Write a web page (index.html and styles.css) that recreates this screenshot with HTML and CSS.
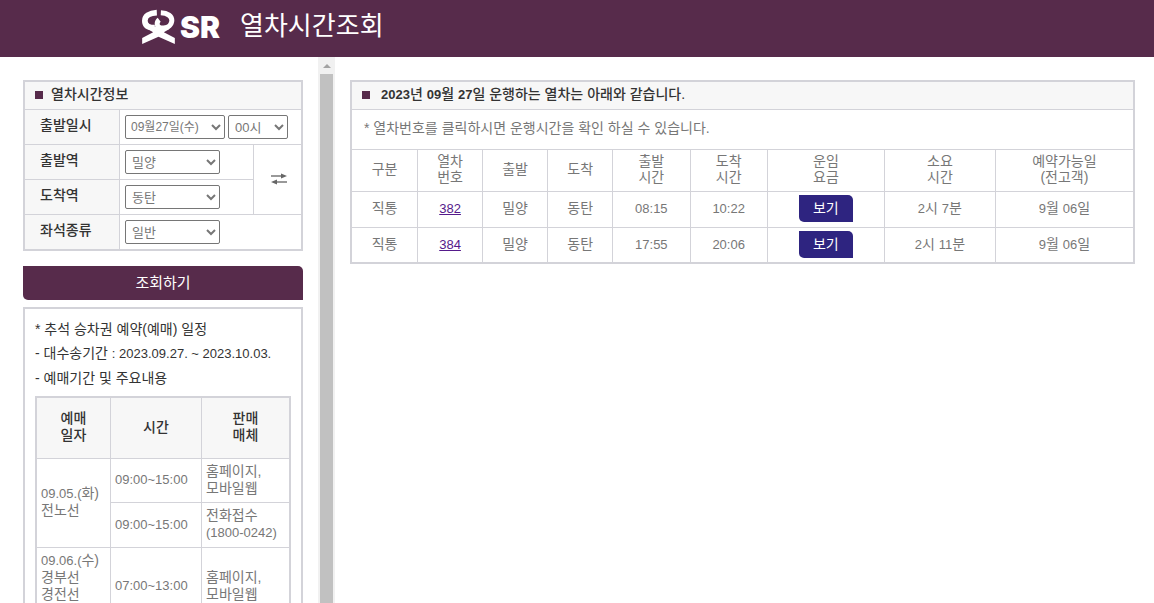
FILE: index.html
```html
<!DOCTYPE html>
<html lang="ko">
<head>
    <meta charset="UTF-8">
    <meta name="viewport" content="width=device-width, initial-scale=1.0">
    <title>열차시간조회</title>
    <link rel="stylesheet" href="styles.css">
</head>
<body>
    <header class="header">
        <div class="logo">
            <svg class="logo-mark" viewBox="9 9 102 105" fill="none" stroke="#fff" stroke-width="17">
                <path d="M55 20C32 21 19 31 19 44c0 15 12 21 30 21"/>
                <path d="M67 20c21 1 33 11 33 23 0 14-12 22-24 23-14 1-20-5-20-13 0-6 2-9 6-12" stroke-width="15"/>
                <path d="M26 68l10-6h50l8 6-18 11 33 17v18L60 92l-49 22V96l33-17z" fill="#fff" stroke="none"/>
            </svg>
            <span class="logo-text">SR</span>
        </div>
        <h1 class="header-title">열차시간조회</h1>
    </header>

    <div class="container">
        <!-- 검색 조건 -->
        <aside class="side">
            <form class="box" onsubmit="return false">
                <h2 class="box-title">열차시간정보</h2>
                <table class="search-table">
                    <tr>
                        <th><label for="date">출발일시</label></th>
                        <td colspan="2">
                            <div class="selects">
                                <select id="date" class="select-date"><option>09월27일(수)</option></select>
                                <select class="select-hour" aria-label="출발시각"><option>00시</option></select>
                            </div>
                        </td>
                    </tr>
                    <tr>
                        <th><label for="from">출발역</label></th>
                        <td><select id="from"><option>밀양</option><option>동탄</option></select></td>
                        <td rowspan="2" class="swap-cell">
                            <button type="button" class="swap-btn" onclick="swapStation()" aria-label="출발역 도착역 바꾸기">
                                <svg width="16" height="12" viewBox="0 0 16 12">
                                    <path d="M0 3h12M4 9h12" stroke="#999" stroke-width="2"/>
                                    <path d="M10 0.5l6 2.5-6 2.5zM6 6.500l-6 2.500 6 2.500z" fill="#666"/>
                                </svg>
                            </button>
                        </td>
                    </tr>
                    <tr>
                        <th><label for="to">도착역</label></th>
                        <td><select id="to"><option>동탄</option><option>밀양</option></select></td>
                    </tr>
                    <tr>
                        <th><label for="seat">좌석종류</label></th>
                        <td colspan="2"><select id="seat"><option>일반</option></select></td>
                    </tr>
                </table>
            </form>
            <button type="button" class="search-btn">조회하기</button>

            <!-- 예매 일정 안내 -->
            <div class="box notice">
                <p>* 추석 승차권 예약(예매) 일정</p>
                <p>- 대수송기간 <span class="num">: 2023.09.27. ~ 2023.10.03.</span></p>
                <p>- 예매기간 및 주요내용</p>
                <table class="box schedule">
                    <tr>
                        <th class="col-day">예매<br>일자</th>
                        <th class="col-time">시간</th>
                        <th>판매<br>매체</th>
                    </tr>
                    <tr>
                        <td rowspan="2"><span class="num">09.05.(</span>화)<br>전노선</td>
                        <td class="num">09:00~15:00</td>
                        <td>홈페이지,<br>모바일웹</td>
                    </tr>
                    <tr class="row-phone">
                        <td class="num">09:00~15:00</td>
                        <td>전화접수<br><span class="num">(1800-0242)</span></td>
                    </tr>
                    <tr class="row-tall">
                        <td class="top"><span class="num">09.06.(</span>수)<br>경부선<br>경전선</td>
                        <td class="num">07:00~13:00</td>
                        <td>홈페이지,<br>모바일웹</td>
                    </tr>
                </table>
            </div>
        </aside>
        <div class="scrollbar">
            <div class="scrollbar-up"></div>
            <div class="scrollbar-thumb"></div>
        </div>

        <!-- 조회 결과 -->
        <main class="main">
            <section class="box">
                <h2 class="box-title result-title"><span><span class="num">2023</span>년 <span class="num">09</span>월 <span class="num">27</span>일 운행하는 열차는 아래와 같습니다.</span></h2>
                <p class="result-note">* 열차번호를 클릭하시면 운행시간을 확인 하실 수 있습니다.</p>
                <table class="result-table">
                    <colgroup>
                        <col class="w-s"><col class="w-s"><col class="w-s"><col class="w-s">
                        <col class="w-m"><col class="w-m"><col class="w-fare"><col class="w-dur"><col>
                    </colgroup>
                    <tr>
                        <th>구분</th>
                        <th>열차<br>번호</th>
                        <th>출발</th>
                        <th>도착</th>
                        <th>출발<br>시간</th>
                        <th>도착<br>시간</th>
                        <th>운임<br>요금</th>
                        <th>소요<br>시간</th>
                        <th>예약가능일<br>(전고객)</th>
                    </tr>
                    <tr>
                        <td>직통</td>
                        <td class="num"><a href="#382">382</a></td>
                        <td>밀양</td>
                        <td>동탄</td>
                        <td class="num">08:15</td>
                        <td class="num">10:22</td>
                        <td><button type="button" class="view-btn">보기</button></td>
                        <td><span class="num">2</span>시 <span class="num">7</span>분</td>
                        <td><span class="num">9</span>월 <span class="num">06</span>일</td>
                    </tr>
                    <tr class="row-last">
                        <td>직통</td>
                        <td class="num"><a href="#384">384</a></td>
                        <td>밀양</td>
                        <td>동탄</td>
                        <td class="num">17:55</td>
                        <td class="num">20:06</td>
                        <td><button type="button" class="view-btn">보기</button></td>
                        <td><span class="num">2</span>시 <span class="num">11</span>분</td>
                        <td><span class="num">9</span>월 <span class="num">06</span>일</td>
                    </tr>
                </table>
            </section>
        </main>
    </div>

    <script>
        // 출발역 <-> 도착역
        function swapStation() {
            const from = document.getElementById('from');
            const to = document.getElementById('to');
            const temp = from.value;
            from.value = to.value;
            to.value = temp;
        }
    </script>
</body>
</html>
```
FILE: styles.css
```css
* {
    box-sizing: border-box;
}
body {
    margin: 0;
    height: 100vh;
    display: flex;
    flex-direction: column;
    overflow: hidden;
    font-family: "Liberation Sans", "Noto Sans CJK KR", sans-serif;
    font-size: 14px;
    line-height: 17px;
    color: #777;
    background: #fff;
}
h1, h2, p {
    margin: 0;
}
button, select {
    font-family: inherit;
}
table {
    width: 100%;
    border-collapse: separate;
    border-spacing: 0;
}
.num {
    font-size: 13px;
}
.header {
    display: flex;
    align-items: center;
    gap: 20px;
    flex-shrink: 0;
    height: 57px;
    padding: 0 0 4px 141px;
    background: #572b4b;
    color: #fff;
}
.logo {
    display: flex;
    align-items: center;
    gap: 4px;
}
.logo-mark {
    width: 35px;
    height: 35px;
}
.logo-text {
    font: 900 30px/34px Inter, sans-serif;
}
.header-title {
    padding-bottom: 2px;
    font-size: 26px;
    font-weight: 400;
    line-height: 36px;
}
.container {
    flex: 1;
    display: flex;
    min-height: 0;
}
.side {
    width: 318px;
    flex-shrink: 0;
    padding: 23px 15px 0 23px;
    overflow: hidden;
}
.scrollbar {
    display: flex;
    flex-direction: column;
    align-items: center;
    width: 17px;
    flex-shrink: 0;
    background: #f1f1f1;
}
.scrollbar-up {
    margin: 7px 0 6px;
    border: 4px solid transparent;
    border-top: none;
    border-bottom-color: #a3a3a3;
}
.scrollbar-thumb {
    flex: 1;
    width: 13px;
    background: #c1c1c1;
}
.main {
    flex: 1;
    padding: 23px 19px 0 15px;
}
.box {
    border: 2px solid #d3d3d9;
}
.box-title {
    display: flex;
    align-items: center;
    gap: 8px;
    height: 27px;
    padding: 0 10px 2px;
    background: #f7f7f7;
    color: #333;
    font-size: 14px;
    font-weight: 500;
}
.box-title::before {
    content: "";
    width: 8px;
    height: 8px;
    background: #572b4b;
}
.result-title {
    gap: 11px;
}
.result-title .num {
    font-weight: 700;
}
.search-table th, .search-table td {
    height: 35px;
    padding: 0 0 0 5px;
    border-top: 1px solid #d3d3d9;
    text-align: left;
}
.search-table th {
    width: 95px;
    padding: 0 0 4px 15px;
    border-right: 1px solid #d3d3d9;
    background: #f7f7f7;
    color: #333;
    font-weight: 500;
}
.search-table .swap-cell {
    width: 48px;
    padding: 0 0 2px 2px;
    border-left: 1px solid #d3d3d9;
    text-align: center;
}
.swap-btn {
    padding: 4px;
    border: none;
    background: none;
    cursor: pointer;
}
.swap-btn svg {
    display: block;
}
.selects {
    display: flex;
    gap: 3px;
}
select {
    display: block;
    width: 95px;
    height: 24px;
    padding: 0 0 0 2px;
    border: 1px solid #767676;
    border-radius: 2px;
    background: #fff;
    color: #777;
    font-size: 13px;
}
.select-date {
    width: 100px;
    padding: 0 0 0 1px;
    font-size: 12px;
}
.select-hour {
    width: 60px;
}
.search-btn {
    display: block;
    width: 100%;
    height: 34px;
    margin: 15px 0 7px;
    padding: 0 0 3px;
    border: none;
    border-radius: 0 5px 0 5px;
    background: #572b4b;
    color: #fff;
    font-size: 15px;
    cursor: pointer;
}
.notice {
    padding: 8px 10px 10px;
    color: #333;
}
.notice p {
    line-height: 24px;
}
.schedule {
    margin-top: 6px;
    color: #777;
}
.schedule th, .schedule td {
    padding: 2px 4px 4px;
    border-right: 1px solid #d3d3d9;
    border-bottom: 1px solid #d3d3d9;
    text-align: left;
}
.schedule th {
    height: 61px;
    background: #f7f7f7;
    color: #333;
    font-weight: 500;
    text-align: center;
}
.schedule th:last-child, .schedule td:last-child:not(.num) {
    border-right: none;
}
.schedule td {
    height: 44px;
}
.schedule .row-phone td {
    height: 45px;
}
.schedule .row-tall td {
    height: 78px;
}
.schedule .top {
    padding-top: 4px;
    vertical-align: top;
}
.col-day {
    width: 74px;
}
.col-time {
    width: 91px;
}
.result-note {
    padding: 10px 12px 12px;
    border-top: 1px solid #d3d3d9;
}
.result-table {
    table-layout: fixed;
}
.result-table th, .result-table td {
    height: 36px;
    padding: 0;
    border-top: 1px solid #d3d3d9;
    text-align: center;
    font-weight: 400;
}
.result-table td {
    padding-bottom: 2px;
}
.result-table .row-last td {
    height: 35px;
}
.result-table th {
    height: 42px;
    padding-bottom: 4px;
    line-height: 16px;
}
.result-table th + th, .result-table td + td {
    border-left: 1px solid #d3d3d9;
}
.result-table a {
    color: #551a8b;
}
.w-s {
    width: 8.33%;
}
.w-m {
    width: 9.9%;
}
.w-fare {
    width: 15%;
}
.w-dur {
    width: 14.2%;
}
.view-btn {
    width: 54px;
    height: 27px;
    padding: 0 0 3px;
    border: none;
    border-radius: 0 5px 0 5px;
    background: #2e2480;
    color: #fff;
    font-size: 14px;
    vertical-align: middle;
    cursor: pointer;
}
```
